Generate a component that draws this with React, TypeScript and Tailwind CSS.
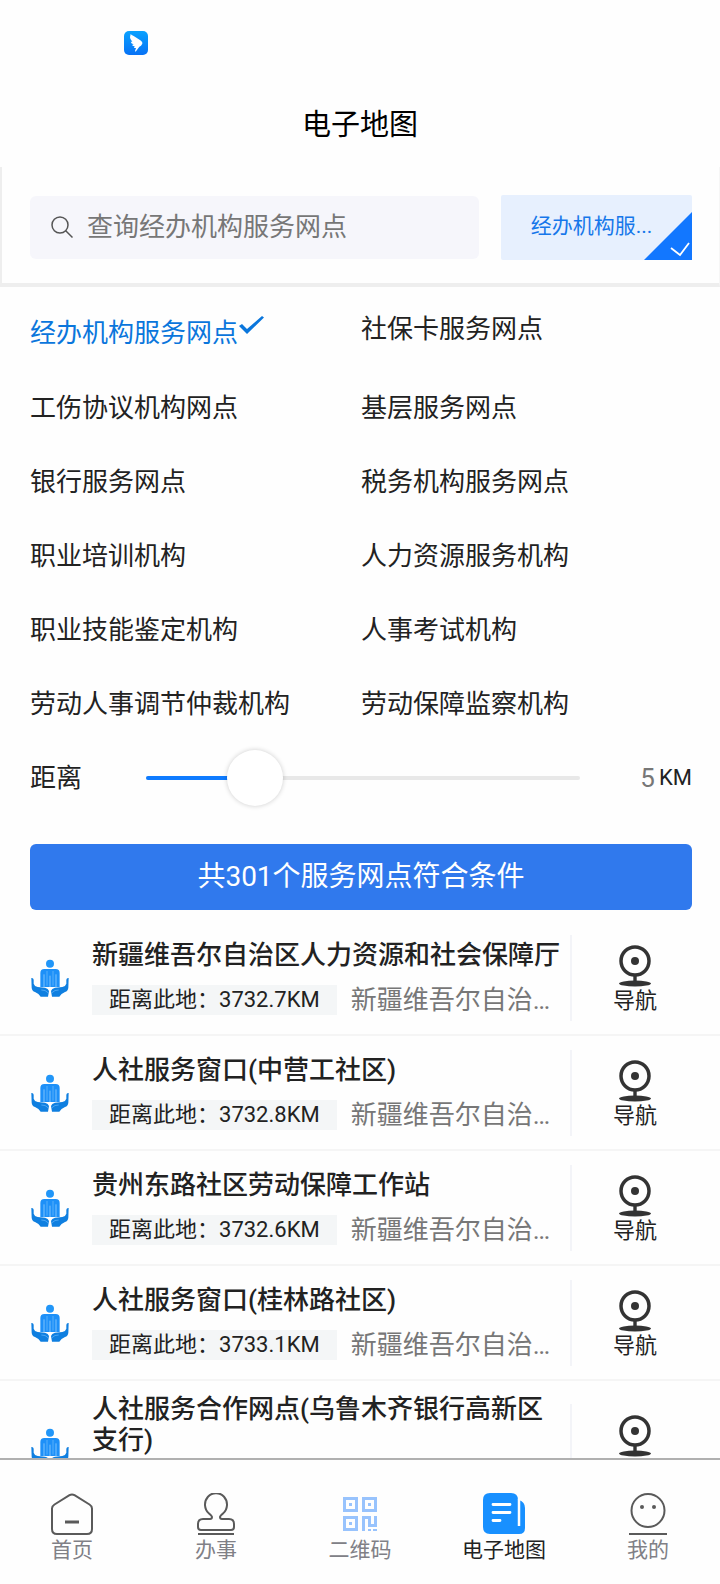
import { useState } from 'react';

const categories = [
  '经办机构服务网点',
  '社保卡服务网点',
  '工伤协议机构网点',
  '基层服务网点',
  '银行服务网点',
  '税务机构服务网点',
  '职业培训机构',
  '人力资源服务机构',
  '职业技能鉴定机构',
  '人事考试机构',
  '劳动人事调节仲裁机构',
  '劳动保障监察机构',
];

const places = [
  { name: '新疆维吾尔自治区人力资源和社会保障厅', distance: '3732.7KM' },
  { name: '人社服务窗口(中营工社区)', distance: '3732.8KM' },
  { name: '贵州东路社区劳动保障工作站', distance: '3732.6KM' },
  { name: '人社服务窗口(桂林路社区)', distance: '3733.1KM' },
  { name: '人社服务合作网点(乌鲁木齐银行高新区支行)', distance: '3733.2KM' },
];

function WingLogo() {
  return (
    <svg className="w-6 h-6" viewBox="0 0 72 72">
      <defs>
        <linearGradient id="wing" x1="0" y1="0" x2="0" y2="1">
          <stop offset="0" stopColor="#0aa2ff" />
          <stop offset="1" stopColor="#0872f5" />
        </linearGradient>
      </defs>
      <rect width="72" height="72" rx="15" fill="url(#wing)" />
      <path
        fill="#fff"
        d="M20 9Q22 12 29 15L49 28Q57 33 55 38L51 44 46 47 35 62 33 60 36 51H30L32 46Q27 46 24 42L29 40Q22 38 20 32L25 32Q18 26 18 19z"
      />
    </svg>
  );
}

function PeopleIcon() {
  return (
    <svg className="w-[38px] h-[38px] shrink-0" viewBox="0 0 114 114">
      <circle cx="57" cy="14" r="12" fill="#2196f8" />
      <path fill="#1e90f8" d="M28 84V42q0-12 12-12h34q12 0 12 12v42z" />
      <path d="M39 46v38M75 46v38M57 50v34" stroke="#7cc2fc" strokeWidth="3" />
      <path d="M48 36v44M66 36v44" stroke="#57affa" strokeWidth="3" />
      <path
        fill="#0f7fe0"
        d="M1 57q6-1 7 5v12q2 8 12 10l22 2q10 2 12 10l-3 17H29Q24 104 12 99 3 96 2 86zM113 57q-6-1-7 5v12q-2 8-12 10l-22 2q-10 2-12 10l3 17H85q5-9 17-14 9-3 10-13z"
      />
      <path d="M31 93q12-1 20 8M83 93q-12-1-20 8" fill="none" stroke="#4aa6f5" strokeWidth="3" />
      <path d="M57 92v22" stroke="#fefefe" strokeWidth="5" />
    </svg>
  );
}

function PinIcon() {
  return (
    <svg className="w-8 h-[47px]" viewBox="0 0 32 47" fill="#333">
      <circle cx="16" cy="21" r="14" fill="none" stroke="#333" strokeWidth="3.500" />
      <circle cx="16" cy="21" r="4" />
      <path d="M14.300 35h3.400v8h-3.400z" />
      <ellipse cx="16" cy="43.500" rx="16" ry="3" />
    </svg>
  );
}

function HomeIcon() {
  return (
    <svg className="w-[42px] h-[42px]" viewBox="0 0 42 42" fill="none" stroke="#5a5a5a" strokeWidth="2">
      <path d="M18.500 2.200q2.500-1.500 5 0L38.500 11.500q2.500 1.500 2.500 4V36q0 5-5 5H6q-5 0-5-5V15.500q0-2.500 2.500-4z" />
      <path d="M14 29h14" strokeWidth="3" />
    </svg>
  );
}

function StampIcon() {
  return (
    <svg className="w-[42px] h-[42px]" viewBox="0 0 42 42" fill="none" stroke="#5a5a5a" strokeWidth="2">
      <path d="M17 24q0-1-3-3.500A11 11.500 0 1 1 28 20.500Q25 23 25 24q0 2 2 2h7q5 0 5 5v3q0 3-3 3H6q-3 0-3-3v-3q0-5 5-5h7q2 0 2-2z" />
      <path d="M3 41h36" />
    </svg>
  );
}

function QrIcon() {
  return (
    <svg className="w-[42px] h-[42px]" viewBox="0 0 42 42" fill="none" stroke="#98c3fd" strokeWidth="3">
      <path d="M5.500 5.500h12v12h-12zM24.500 5.500h12v12h-12zM5.500 24.500h12v12h-12z" />
      <path d="M10 11.500h3M29 11.500h3M10 30.500h3" />
      <path d="M24.500 38V24.500h6v8h6V23" />
      <path d="M29 37h3M34 37h4" strokeWidth="2" />
    </svg>
  );
}

function MapIcon() {
  return (
    <svg className="w-[42px] h-[42px]" viewBox="0 0 42 42">
      <path fill="#1890ff" d="M7 0h21q7 0 7 7h1q6 2 6 8v20q0 6-6 6H7q-7 0-7-7V7q0-7 7-7z" />
      <path d="M36 6v27" stroke="#fff" strokeWidth="2.500" />
      <path d="M10 11.500h17M10 19.500h17M10 27.500h7" stroke="#fff" strokeWidth="2.800" strokeLinecap="round" />
    </svg>
  );
}

function FaceIcon() {
  return (
    <svg className="w-[42px] h-[42px]" viewBox="0 0 42 42" fill="none" stroke="#5a5a5a" strokeWidth="2">
      <circle cx="21" cy="17.500" r="16.500" />
      <circle cx="15" cy="14" r="2" fill="#5a5a5a" stroke="none" />
      <circle cx="27" cy="14" r="2" fill="#5a5a5a" stroke="none" />
      <path d="M2 41h38" />
    </svg>
  );
}

const tabs = [
  { label: '首页', icon: <HomeIcon /> },
  { label: '办事', icon: <StampIcon /> },
  { label: '二维码', icon: <QrIcon /> },
  { label: '电子地图', icon: <MapIcon />, active: true },
  { label: '我的', icon: <FaceIcon /> },
];

export default function App() {
  const [selected, setSelected] = useState(0);
  const [km, setKm] = useState(5);

  return (
    <div
      lang="zh-CN"
      className="h-screen flex flex-col bg-[#fefefe] text-[#222] font-[Roboto,'Noto_Sans_CJK_SC',sans-serif]"
    >
      {/* Header */}
      <header className="shrink-0">
        <div className="pt-[31px] pl-[124px]">
          <WingLogo />
        </div>
        <h1 className="pt-[50px] pb-[22px] text-[29px] leading-10 text-center text-black">电子地图</h1>
      </header>

      {/* Search */}
      <section className="shrink-0 flex items-center gap-[22px] h-[120px] pt-1 pl-7 pr-[27px] border-l-2 border-r border-b-4 border-[#eee] border-r-[#f6f6f6]">
        <label className="flex-1 min-w-0 flex items-center h-[63px] pl-[21px] rounded-md bg-[#f6f6fb]">
          <svg className="w-[22px] h-[22px] shrink-0" viewBox="0 0 22 22" fill="none" stroke="#555" strokeWidth="1.500">
            <circle cx="9" cy="9" r="8" />
            <path d="M14.500 14.500l7 7" />
          </svg>
          <input
            type="text"
            aria-label="查询"
            placeholder="查询经办机构服务网点"
            className="flex-1 min-w-0 ml-3.5 bg-transparent outline-none text-[26px] leading-9 placeholder:text-[#777]"
          />
        </label>
        <button className="relative w-[191px] h-[65px] pr-2.5 rounded-xs bg-[#e7f0fe] text-[21px] text-[#1677ea] text-center">
          经办机构服...
          <svg className="absolute right-0 bottom-0 w-12 h-12" viewBox="0 0 48 48">
            <path d="M48 0v48H0z" fill="#1277ff" />
            <path d="M27 36l9 7 9-12" fill="none" stroke="#fff" strokeWidth="1.800" />
          </svg>
        </button>
      </section>

      {/* Categories */}
      <section className="shrink-0 grid grid-cols-2 pl-[30px] pr-7">
        {categories.map((name, i) => (
          <button
            key={name}
            onClick={() => setSelected(i)}
            className={`flex items-center text-left text-[26px] leading-9 ${i < 2 ? 'h-[84px]' : 'h-[74px]'} ${
              i === selected ? 'pt-2 text-[#0a76dc]' : ''
            }`}
          >
            {name}
            {i === selected && (
              <svg className="w-[26px] h-[18px] mb-4" viewBox="0 0 26 18">
                <path d="M1 10l3-2 5 5L24 0l2 1.500L9 18z" fill="#0a76dc" />
              </svg>
            )}
          </button>
        ))}
      </section>

      {/* Distance */}
      <section className="shrink-0 flex items-center h-[74px] pl-[30px] pr-7">
        <label htmlFor="km" className="w-[116px] text-[26px] leading-9">
          距离
        </label>
        <div className="relative flex-1 h-14 flex items-center">
          <div className="w-full h-1 rounded-full bg-[#e8e8e8]">
            <div className="h-1 rounded-full bg-[#0e7bff]" style={{ width: `${(km / 20) * 100}%` }} />
          </div>
          <input
            id="km"
            type="range"
            min={0}
            max={20}
            value={km}
            onChange={(e) => setKm(Number(e.target.value))}
            className="absolute inset-y-0 -inset-x-7 appearance-none bg-transparent [&::-webkit-slider-thumb]:appearance-none [&::-webkit-slider-thumb]:w-14 [&::-webkit-slider-thumb]:h-14 [&::-webkit-slider-thumb]:rounded-full [&::-webkit-slider-thumb]:bg-white [&::-webkit-slider-thumb]:shadow-[0_0_5px_rgba(0,0,0,0.2)]"
          />
        </div>
        <div className="w-28 flex items-center justify-end gap-1">
          <span className="text-[26px] leading-9 text-[#777]">{km}</span>
          <span className="text-[22px] leading-9">KM</span>
        </div>
      </section>

      <div className="shrink-0 pl-[30px] pr-7 pt-[29px] pb-[11px]">
        <button className="w-full h-[66px] rounded-md bg-[#3079ed] text-[28px] text-white">
          共301个服务网点符合条件
        </button>
      </div>

      {/* Results */}
      <ul className="flex-1 min-h-0 overflow-hidden">
        {places.map((place) => (
          <li key={place.name} className="flex items-center min-h-[115px] py-[13px] pl-[31px] border-b-2 border-[#f5f5f5]">
            <PeopleIcon />
            <div className="flex-1 min-w-0 ml-[23px] pr-2">
              <h2 className="text-[26px] leading-[31px] font-medium">{place.name}</h2>
              <div className="mt-3.5 flex items-center gap-3.5">
                <span className="shrink-0 px-[17px] text-[22px] leading-[30px] bg-[#f4f6f7]">
                  距离此地：{place.distance}
                </span>
                <span className="text-[26px] leading-[30px] whitespace-nowrap text-[#777]">新疆维吾尔自治…</span>
              </div>
            </div>
            <button className="w-[150px] h-[86px] pr-[22px] shrink-0 flex flex-col items-center justify-center border-l-2 border-[#f3f4f8]">
              <PinIcon />
              <span className="text-[22px] leading-7">导航</span>
            </button>
          </li>
        ))}
      </ul>

      {/* Tab bar */}
      <nav className="shrink-0 flex h-[126px] pt-[33px] border-t-2 border-[#b0b0b0] bg-[#fefefe]">
        {tabs.map((tab) => (
          <a
            key={tab.label}
            href="#"
            className={`flex-1 flex flex-col items-center text-[21px] leading-[30px] ${
              tab.active ? 'text-[#222]' : 'text-[#808086]'
            }`}
          >
            {tab.icon}
            {tab.label}
          </a>
        ))}
      </nav>
    </div>
  );
}
